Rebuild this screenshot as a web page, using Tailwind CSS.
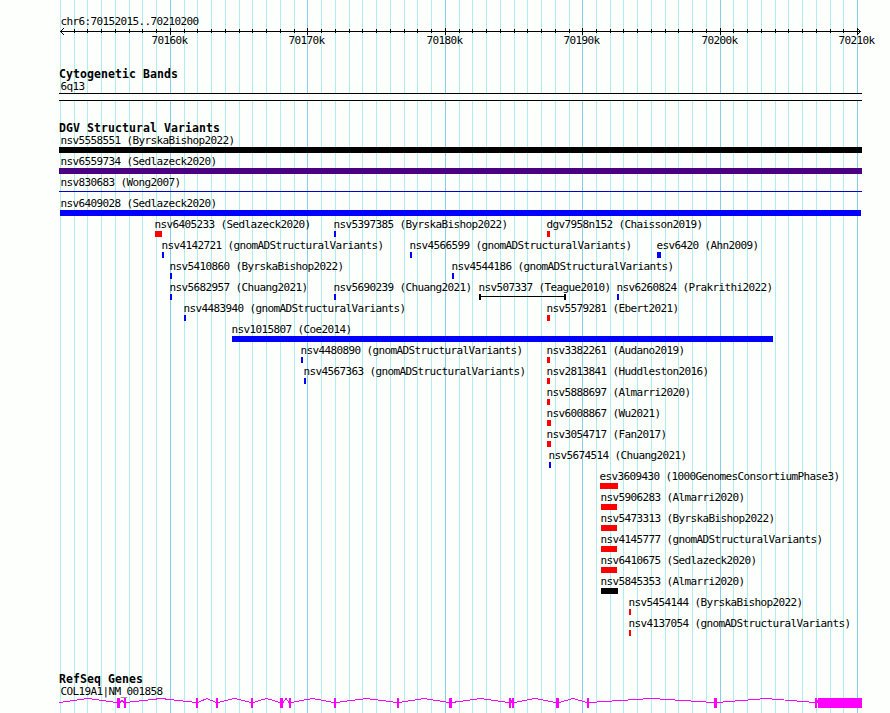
<!DOCTYPE html>
<html lang="en">
<head>
    <meta charset="UTF-8">
    <meta name="viewport" content="width=device-width, initial-scale=1.0">
    <title>chr6:70152015..70210200</title>
    <script src="https://cdn.jsdelivr.net/npm/@tailwindcss/browser@4"></script>
</head>
<body class="bg-[#fdfffc]">
    <div class="relative w-[890px] h-[713px] overflow-hidden text-black font-['DejaVu_Sans_Mono','Liberation_Mono',monospace] text-[11px] leading-[13px] tracking-[-0.622px] whitespace-nowrap">
        <!-- grid lines -->
        <div id="grid" class="absolute inset-0"></div>

        <div class="relative flex flex-col">
            <!-- ruler -->
            <div class="pt-[15px] pl-[60.5px] h-7">chr6:70152015..70210200</div>
            <svg id="ruler" class="block w-[890px] h-[7px]" viewBox="0 0 890 7" shape-rendering="crispEdges">
                <rect x="60" y="3" width="801" height="1"/>
                <path d="M61 2h1v1h-1zM62 1h1v1h-1zM63 0h1v1h-1zM61 4h1v1h-1zM62 5h1v1h-1zM63 6h1v1h-1z"/>
                <path d="M859 2h1v1h-1zM858 1h1v1h-1zM857 0h1v1h-1zM859 4h1v1h-1zM858 5h1v1h-1zM857 6h1v1h-1z"/>
            </svg>
            <div id="ruler-labels" class="relative -mt-px h-[34px]"></div>

            <!-- Cytogenetic Bands -->
            <h2 class="pl-[59px] h-3 font-bold text-[11.5px] tracking-[0.077px]">Cytogenetic Bands</h2>
            <div class="pl-[60.5px] h-[13px]">6q13</div>
            <div class="ml-[59px] w-[803px] h-2 border-y border-black bg-[#fdfffc]"></div>

            <!-- DGV Structural Variants -->
            <h2 class="mt-[21px] pl-[59px] h-3 font-bold text-[11.5px] tracking-[0.077px]">DGV Structural Variants</h2>
            <div id="variants"></div>

            <!-- RefSeq Genes -->
            <h2 class="mt-[35px] pl-[59px] h-3 font-bold text-[11.5px] tracking-[0.077px]">RefSeq Genes</h2>
            <div class="pl-[60.5px] h-[13px]">COL19A1|NM_001858</div>
            <svg id="gene" class="block w-[890px] h-[10px]" viewBox="0 0 890 10" shape-rendering="crispEdges"></svg>
        </div>
    </div>

    <script>
        const blue = 'bg-[#0000ff]', red = 'bg-[#ff0000]', black = 'bg-black', indigo = 'bg-[#4b0082]';

        // each row: [label, bar start, bar width, colour]
        const rows = [
            [['nsv5558551 (ByrskaBishop2022)', 59, 803, black]],
            [['nsv6559734 (Sedlazeck2020)', 59, 803, indigo]],
            [['nsv830683 (Wong2007)', 59, 803, 'line']],
            [['nsv6409028 (Sedlazeck2020)', 60, 801, blue]],
            [['nsv6405233 (Sedlazeck2020)', 155, 7, red], ['nsv5397385 (ByrskaBishop2022)', 334, 2, blue], ['dgv7958n152 (Chaisson2019)', 547, 3, red]],
            [['nsv4142721 (gnomADStructuralVariants)', 162, 2, blue], ['nsv4566599 (gnomADStructuralVariants)', 410, 2, blue], ['esv6420 (Ahn2009)', 657, 4, blue]],
            [['nsv5410860 (ByrskaBishop2022)', 170, 2, blue], ['nsv4544186 (gnomADStructuralVariants)', 452, 2, blue]],
            [['nsv5682957 (Chuang2021)', 170, 2, blue], ['nsv5690239 (Chuang2021)', 334, 2, blue], ['nsv507337 (Teague2010)', 479, 87, 'span'], ['nsv6260824 (Prakrithi2022)', 617, 2, blue]],
            [['nsv4483940 (gnomADStructuralVariants)', 184, 2, blue], ['nsv5579281 (Ebert2021)', 547, 3, red]],
            [['nsv1015807 (Coe2014)', 232, 541, blue]],
            [['nsv4480890 (gnomADStructuralVariants)', 301, 2, blue], ['nsv3382261 (Audano2019)', 547, 3, red]],
            [['nsv4567363 (gnomADStructuralVariants)', 304, 2, blue], ['nsv2813841 (Huddleston2016)', 547, 3, red]],
            [['nsv5888697 (Almarri2020)', 547, 3, red]],
            [['nsv6008867 (Wu2021)', 547, 4, red]],
            [['nsv3054717 (Fan2017)', 547, 4, red]],
            [['nsv5674514 (Chuang2021)', 549, 2, blue]],
            [['esv3609430 (1000GenomesConsortiumPhase3)', 600, 18, red]],
            [['nsv5906283 (Almarri2020)', 601, 16, red]],
            [['nsv5473313 (ByrskaBishop2022)', 601, 16, red]],
            [['nsv4145777 (gnomADStructuralVariants)', 601, 16, red]],
            [['nsv6410675 (Sedlazeck2020)', 601, 16, red]],
            [['nsv5845353 (Almarri2020)', 601, 17, black]],
            [['nsv5454144 (ByrskaBishop2022)', 629, 2, red]],
            [['nsv4137054 (gnomADStructuralVariants)', 629, 2, red]],
        ];

        function bar(x, w, kind) {
            const pos = `style="left:${x}px;width:${w}px"`;
            if (kind === 'line') return `<div class="absolute top-[15px] h-px bg-[#0000cd]" ${pos}></div>`;
            if (kind === 'span') return `<div class="absolute top-[13px] h-1.5 border-x-2 border-black flex pt-0.5" ${pos}><div class="h-px w-full bg-black"></div></div>`;
            return `<div class="absolute top-[13px] h-1.5 ${kind}" ${pos}></div>`;
        }

        document.getElementById('variants').innerHTML = rows.map(row =>
            '<div class="relative h-[21px]">' + row.map(([label, x, w, kind]) =>
                `<span class="absolute top-0" style="left:${Math.max(60.5, x - 0.5)}px">${label}</span>` + bar(x, w, kind)
            ).join('') + '</div>'
        ).join('');

        // grid and ruler: one line per 1 kb, a darker one per 10 kb
        let grid = '', ticks = '', labels = '';
        for (let k = -8; k <= 50; k++) {
            const x = Math.round(169.9 + 13.745 * k);
            const major = k % 10 === 0;
            grid += `<div class="absolute inset-y-0 w-px ${major ? 'bg-[#87ceeb]' : 'bg-[#afeeee]'}" style="left:${x}px"></div>`;
            if (k > -8) ticks += major ? `<rect x="${x}" y="0" width="1" height="7"/>` : `<rect x="${x}" y="1" width="1" height="4"/>`;
            if (major) labels += `<span class="absolute top-0" style="left:${x - 18.5}px">${70160 + k}k</span>`;
        }
        document.getElementById('grid').innerHTML = grid;
        document.getElementById('ruler').innerHTML += ticks;
        document.getElementById('ruler-labels').innerHTML = labels;

        // exons: [start, width]
        const exons = [[117, 3], [124, 2], [196, 2], [216, 2], [251, 2], [280, 3], [289, 2], [334, 2], [397, 2], [449, 3],
            [509, 2], [512, 2], [556, 3], [587, 2], [714, 3], [815, 2], [818, 44]];
        let gene = '', from = 59;
        exons.forEach(([x, w]) => {
            const peak = x - from > 5 ? 0.5 : 2.5;
            gene += `<polyline points="${from},4.5 ${(from + x) / 2},${peak} ${x},4.5" fill="none" stroke="#ff00ff"/>`;
            gene += `<rect x="${x}" y="0" width="${w}" height="10" fill="#ff00ff"/>`;
            from = x + w;
        });
        document.getElementById('gene').innerHTML = gene;
    </script>
</body>
</html>
